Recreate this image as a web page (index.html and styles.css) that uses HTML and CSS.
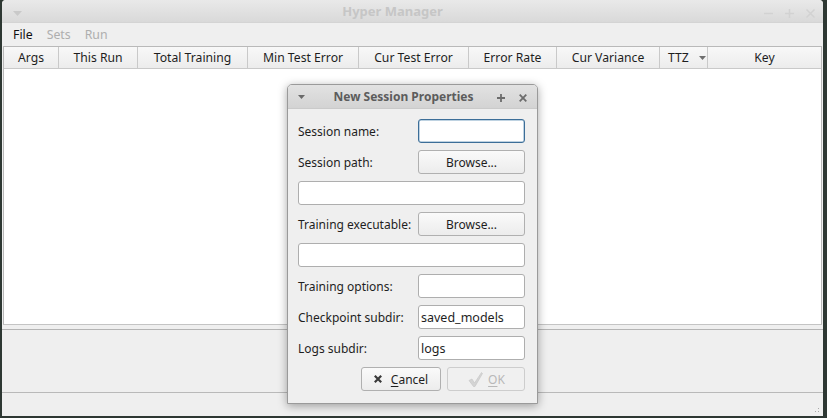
FILE: index.html
```html
<!DOCTYPE html>
<html>
<head>
<meta charset="utf-8">
<link rel="stylesheet" href="styles.css">
</head>
<body>
<div class="desktop">
  <div class="window">
    <div class="titlebar">
      <svg class="tb-menu" width="9" height="5" viewBox="0 0 9 5"><path d="M0 0 H9 L4.5 5 Z" fill="#c9c9c9"/></svg>
      <span class="tb-title">Hyper Manager</span>
      <span class="tb-btns">
        <svg width="9" height="9" viewBox="0 0 9 9"><path d="M0 4.5 H9" stroke="#d2d2d2" stroke-width="1.5"/></svg>
        <svg width="9" height="9" viewBox="0 0 9 9"><path d="M0 4.5 H9 M4.5 0 V9" stroke="#d2d2d2" stroke-width="1.5"/></svg>
        <svg width="9" height="9" viewBox="0 0 9 9"><path d="M0.5 0.5 L8.5 8.5 M8.5 0.5 L0.5 8.5" stroke="#d2d2d2" stroke-width="1.5"/></svg>
      </span>
    </div>
    <div class="menubar">
      <span class="menu">File</span>
      <span class="menu disabled">Sets</span>
      <span class="menu disabled">Run</span>
    </div>
    <div class="table">
      <div class="header">
        <div class="col" style="width:55px">Args</div>
        <div class="col" style="width:79px">This Run</div>
        <div class="col" style="width:110px">Total Training</div>
        <div class="col" style="width:111px">Min Test Error</div>
        <div class="col" style="width:110px">Cur Test Error</div>
        <div class="col" style="width:88px">Error Rate</div>
        <div class="col" style="width:103px">Cur Variance</div>
        <div class="col ttz" style="width:48px">TTZ<svg class="sort" width="7" height="4" viewBox="0 0 7 4"><path d="M0 0 H7 L3.5 4 Z" fill="#6e6e6e"/></svg></div>
        <div class="col last">Key</div>
      </div>
      <div class="tbody"></div>
    </div>
    <div class="panel"></div>
    <div class="status"><span class="grip"></span></div>
  </div>

  <div class="dialog">
    <div class="dtitle">
      <svg class="dt-menu" width="7" height="4" viewBox="0 0 7 4"><path d="M0 0 H7 L3.5 4 Z" fill="#6a6a6a"/></svg>
      <span class="dt-text">New Session Properties</span>
      <span class="dt-btns">
        <svg width="8" height="8" viewBox="0 0 8 8"><path d="M0 4 H8 M4 0 V8" stroke="#6c6c6c" stroke-width="1.8"/></svg>
        <svg width="8" height="8" viewBox="0 0 8 8"><path d="M0.7 0.7 L7.3 7.3 M7.3 0.7 L0.7 7.3" stroke="#6c6c6c" stroke-width="1.8"/></svg>
      </span>
    </div>
    <div class="dbody">
      <div class="row"><span class="lbl">Session name:</span><span class="field focus"></span></div>
      <div class="row"><span class="lbl">Session path:</span><span class="btn">Browse...</span></div>
      <div class="row"><span class="field wide"></span></div>
      <div class="row"><span class="lbl">Training executable:</span><span class="btn">Browse...</span></div>
      <div class="row"><span class="field wide"></span></div>
      <div class="row"><span class="lbl">Training options:</span><span class="field"></span></div>
      <div class="row"><span class="lbl">Checkpoint subdir:</span><span class="field">saved_models</span></div>
      <div class="row"><span class="lbl">Logs subdir:</span><span class="field">logs</span></div>
      <div class="row buttons">
        <span class="btn cancel"><svg width="8" height="8" viewBox="0 0 8 8"><path d="M0.8 0.8 L7.2 7.2 M7.2 0.8 L0.8 7.2" stroke="#3a3a3a" stroke-width="2.2"/></svg><span><u>C</u>ancel</span></span>
        <span class="btn ok disabled"><svg width="17" height="17" viewBox="0 0 17 17"><path d="M2 9.5 L5 8 L7.5 12 L14.5 1.5 L15.5 2.5 L8 15.5 L6.5 15.5 Z" fill="#d4d4d4" stroke="#c4c4c4" stroke-width="0.6"/></svg><span><u>O</u>K</span></span>
      </div>
    </div>
  </div>
</div>
</body>
</html>
```
FILE: styles.css
```css
* { box-sizing: border-box; }
html, body { margin: 0; padding: 0; }
body {
  width: 827px; height: 418px; overflow: hidden;
  background: #2e3833;
  font-family: "Noto Sans", "Open Sans", sans-serif;
  font-size: 12px;
  color: #1e1e1e;
}
.desktop { position: relative; width: 827px; height: 418px; }
.window {
  margin-left: 2px; width: 821px; height: 418px;
  display: flex; flex-direction: column;
  background: #efefef;
  border-radius: 4px 4px 0 0;
  overflow: hidden;
}
.titlebar {
  height: 23px; flex: none;
  display: flex; align-items: center; position: relative;
  background: linear-gradient(#e9e9e9, #d9d9d9);
  border-bottom: 1px solid #d4d4d4;
}
.tb-menu { position: absolute; left: 11px; top: 11px; }
.tb-title { flex: 1; text-align: center; font-weight: bold; color: #c6c6c6; font-size: 13px; padding-right: 40px; }
.tb-btns { position: absolute; right: 8px; top: 9px; display: flex; gap: 12px; }
.tb-btns svg { display: block; }
.menubar {
  height: 23px; flex: none; display: flex; align-items: center;
  padding-left: 11px; gap: 14px; background: #efefef;
  font-size: 12.3px;
}
.menu { color: #111; }
.menu.disabled { color: #aeaeae; }
.table {
  flex: 1; display: flex; flex-direction: column;
  border: 1px solid #b9b9b9; border-bottom-color: #c4c4c4;
  margin: 0 1px 0 1px;
}
.header {
  height: 22px; flex: none; display: flex;
  background: linear-gradient(#f8f8f8, #ececec);
  border-bottom: 1px solid #c9c9c9;
}
.col {
  flex: none; display: flex; align-items: center; justify-content: center;
  border-right: 1px solid #c9c9c9; color: #1e1e1e; font-size: 12.2px;
}
.col.last { flex: 1; border-right: none; }
.col.ttz { justify-content: flex-start; padding-left: 8px; }
.sort { margin-left: 10px; }
.tbody { flex: 1; background: #fff; }
.panel {
  height: 64px; flex: none; margin-top: 4px;
  border-top: 1px solid #b4b4b4; border-bottom: 1px solid #b9b9b9;
  background: #efefef;
}
.status { height: 25px; flex: none; position: relative; background: #efefef; border-bottom: 2px solid #2e3833; }
.grip {
  position: absolute; right: 2px; bottom: 2px; width: 10px; height: 10px;
  background-image: radial-gradient(circle, #a8a8a8 0.8px, transparent 1px);
  background-size: 3px 3px;
  clip-path: polygon(100% 0, 100% 100%, 0 100%);
}

.dialog {
  position: absolute; left: 287px; top: 84px; width: 251px; height: 320px;
  background: #efefef;
  border: 1px solid #9a9a9a;
  border-radius: 5px 5px 0 0;
  box-shadow: 0 2px 10px rgba(0,0,0,0.35);
  display: flex; flex-direction: column;
}
.dtitle {
  height: 24px; flex: none; position: relative;
  display: flex; align-items: center;
  background: linear-gradient(#e2e2e2, #d3d3d3);
  border-radius: 4px 4px 0 0;
  border-bottom: 1px solid #cacaca;
}
.dt-menu { position: absolute; left: 10px; top: 10px; }
.dt-text { flex: 1; text-align: center; font-weight: bold; color: #5c5c5c; font-size: 12px; padding-right: 18px; }
.dt-btns { position: absolute; right: 10px; top: 9px; display: flex; gap: 14px; }
.dt-btns svg { display: block; }
.dbody { padding: 10px 12px 0 10px; display: flex; flex-direction: column; gap: 7px; }
.row { height: 24px; display: flex; align-items: center; justify-content: space-between; }
.lbl { color: #1e1e1e; }
.field {
  width: 107px; height: 24px; background: #fff;
  border: 1px solid #aeaeae; border-radius: 3px;
  display: flex; align-items: center; padding-left: 2px;
  color: #1e1e1e; font-size: 12.5px;
}
.field.focus { border-color: #3c6e98; box-shadow: inset 0 0 0 0.5px #7fa5c4; }
.field.wide { width: 227px; }
.btn {
  width: 107px; height: 24px;
  border: 1px solid #b0b0b0; border-radius: 3px;
  background: linear-gradient(#fafafa, #ececec);
  display: flex; align-items: center; justify-content: center;
  color: #1e1e1e;
}
.buttons { justify-content: flex-end; gap: 6px; }
.btn.cancel { width: 80px; gap: 9px; }
.btn.ok { width: 78px; gap: 4px; }
.btn.disabled { color: #b8b8b8; border-color: #cdcdcd; background: #f0f0f0; }
u { text-decoration-thickness: 1px; text-underline-offset: 2px; }
```
